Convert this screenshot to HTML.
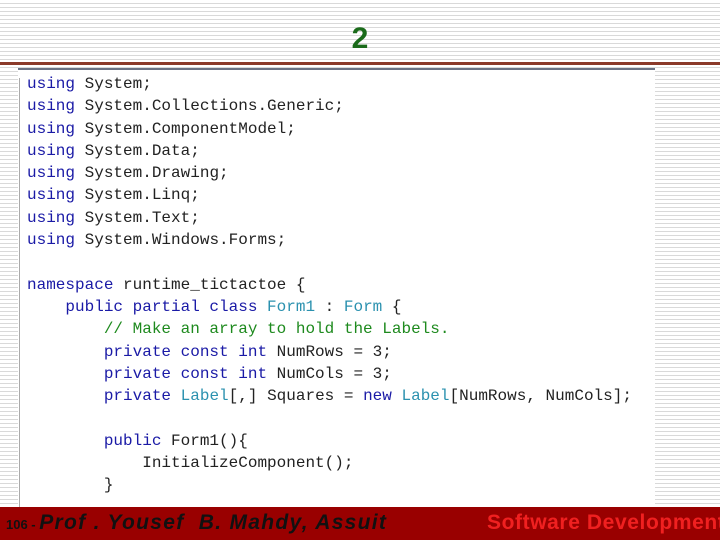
<!DOCTYPE html>
<html><head><style>
body{margin:0;width:720px;height:540px;overflow:hidden;position:relative;background:#fff repeating-linear-gradient(to bottom,#fff 0,#fff 3px,#d9d9d9 3px,#d9d9d9 4px);font-family:"Liberation Sans",sans-serif}
.t{position:absolute;left:0;width:720px;top:22px;text-align:center;color:#1a6b1a;font-weight:bold;font-size:30px}
.bar{position:absolute;left:0;top:62px;width:720px;height:3px;background:#8b3a2a}
.box{position:absolute;left:18px;top:68px;width:637px;height:439px;background:#fff}
.box:before{content:"";position:absolute;left:0;top:0;width:100%;height:2px;background:#6a7385}
.g{position:absolute;left:1px;top:10px;width:1px;height:430px;background:#aaa}
pre{position:absolute;left:9px;top:5px;margin:0;font-family:"Liberation Mono",monospace;font-size:16px;line-height:22.3px;color:#222}
.k{color:#1a1aa6}.y{color:#2b91af}.c{color:#1e8a1e}
.f{position:absolute;left:0;top:507px;width:720px;height:33px;background:#990000;overflow:hidden}
.f1{position:absolute;left:6px;top:4px;font-size:21px;font-style:italic;font-weight:bold;color:#111;letter-spacing:1.3px;white-space:nowrap}
.f1 small{font-size:13px;font-style:normal;letter-spacing:0}
.f2{position:absolute;left:487px;top:4px;font-size:21px;font-weight:bold;color:#f02020;white-space:nowrap;letter-spacing:0.6px}
</style></head><body>
<div class="t">2</div>
<div class="bar"></div>
<div class="box"><div class="g"></div>
<pre><span class="k">using</span> System;
<span class="k">using</span> System.Collections.Generic;
<span class="k">using</span> System.ComponentModel;
<span class="k">using</span> System.Data;
<span class="k">using</span> System.Drawing;
<span class="k">using</span> System.Linq;
<span class="k">using</span> System.Text;
<span class="k">using</span> System.Windows.Forms;

<span class="k">namespace</span> runtime_tictactoe {
    <span class="k">public partial class</span> <span class="y">Form1</span> : <span class="y">Form</span> {
        <span class="c">// Make an array to hold the Labels.</span>
        <span class="k">private const int</span> NumRows = 3;
        <span class="k">private const int</span> NumCols = 3;
        <span class="k">private</span> <span class="y">Label</span>[,] Squares = <span class="k">new</span> <span class="y">Label</span>[NumRows, NumCols];

        <span class="k">public</span> Form1(){
            InitializeComponent();
        }</pre></div>
<div class="f"><div class="f1"><small>106 - </small>Prof . Yousef &nbsp;B. Mahdy, Assuit</div><div class="f2">Software Development</div></div>
</body></html>
